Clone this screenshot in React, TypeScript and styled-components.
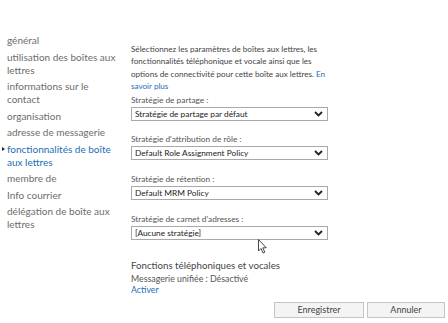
import React from "react";
import styled, { createGlobalStyle } from "styled-components";

const Global = createGlobalStyle`
  html, body { margin: 0; padding: 0; background: #ffffff; }
  body { font-family: Lato, "Open Sans", sans-serif; }
  * { box-sizing: border-box; }
`;

const Page = styled.div`
  position: relative;
  width: 448px;
  height: 323px;
  overflow: hidden;
  display: flex;
  flex-direction: column;
`;

const Body = styled.div`
  display: flex;
  flex-direction: row;
  align-items: flex-start;
`;

const Nav = styled.ul`
  list-style: none;
  margin: 0;
  padding: 34px 0 0 7px;
  width: 131px;
  display: flex;
  flex-direction: column;
  gap: 3.5px;
`;

const NavItem = styled.li<{ $active?: boolean }>`
  position: relative;
  font-size: 10px;
  line-height: 13px;
  color: ${(p) => (p.$active ? "#1d6eb6" : "#6d6d6d")};
  padding-right: 8px;
`;

const Bullet = styled.span`
  position: absolute;
  left: -5px;
  top: 4px;
  width: 0;
  height: 0;
  border-top: 2.5px solid transparent;
  border-bottom: 2.5px solid transparent;
  border-left: 3px solid #222;
`;

const Main = styled.div`
  width: 200px;
  padding-top: 42.8px;
  display: flex;
  flex-direction: column;
`;

const Desc = styled.p`
  margin: 0;
  width: 198px;
  font-size: 8.1px;
  line-height: 12.4px;
  color: #444;
`;

const Link = styled.a`
  color: #1d6eb6;
  text-decoration: none;
`;

const Field = styled.div<{ $top: number }>`
  margin-top: ${(p) => p.$top}px;
  display: flex;
  flex-direction: column;
  gap: 1px;
`;

const Label = styled.div`
  font-size: 8.3px;
  line-height: 12px;
  color: #555;
`;

const Select = styled.div`
  width: 197px;
  height: 14px;
  border: 1px solid #a9a9a9;
  background: #fff;
  display: flex;
  align-items: center;
  justify-content: space-between;
  padding: 0 4px 0 3px;
  font-size: 8.3px;
  color: #222;
`;

const Heading = styled.div`
  margin-top: 17.5px;
  font-size: 9.7px;
  line-height: 15px;
  color: #444;
`;

const Small = styled.div`
  font-size: 8.8px;
  line-height: 11px;
  color: #555;
`;

const Footer = styled.div`
  margin-top: auto;
  display: flex;
  justify-content: flex-end;
  gap: 3px;
  padding: 0 3px 5px 0;
`;

const Button = styled.button<{ $w: number }>`
  width: ${(p) => p.$w}px;
  height: 16px;
  border: 1px solid #c4c4c4;
  background: #f4f4f4;
  font-family: Lato, "Open Sans", sans-serif;
  font-size: 9px;
  color: #444;
  padding: 0;
  line-height: 14px;
`;

const Cursor = styled.svg`
  position: absolute;
  left: 258px;
  top: 239px;
`;

const Chevron = () => (
  <svg width="9" height="6" viewBox="0 0 9 6">
    <path d="M1 1 L4.5 4.5 L8 1" fill="none" stroke="#222" strokeWidth="1.8" />
  </svg>
);

const navItems = [
  "général",
  "utilisation des boîtes aux lettres",
  "informations sur le contact",
  "organisation",
  "adresse de messagerie",
  "fonctionnalités de boîte aux lettres",
  "membre de",
  "Info courrier",
  "délégation de boîte aux lettres",
];

const fields = [
  { label: "Stratégie de partage :", value: "Stratégie de partage par défaut", top: 1.6 },
  { label: "Stratégie d'attribution de rôle :", value: "Default Role Assignment Policy", top: 12 },
  { label: "Stratégie de rétention :", value: "Default MRM Policy", top: 13 },
  { label: "Stratégie de carnet d'adresses :", value: "[Aucune stratégie]", top: 13 },
];

export default function App() {
  return (
    <Page>
      <Global />
      <Body>
        <Nav>
          {navItems.map((n, i) => (
            <NavItem key={n} $active={i === 5}>
              {i === 5 && <Bullet />}
              {n}
            </NavItem>
          ))}
        </Nav>
        <Main>
          <Desc>
            Sélectionnez les paramètres de boîtes aux lettres, les fonctionnalités téléphonique et vocale ainsi que les options de connectivité pour cette boîte aux lettres.{" "}
            <Link href="#">En savoir plus</Link>
          </Desc>
          {fields.map((f) => (
            <Field key={f.label} $top={f.top}>
              <Label>{f.label}</Label>
              <Select>
                <span>{f.value}</span>
                <Chevron />
              </Select>
            </Field>
          ))}
          <Heading>Fonctions téléphoniques et vocales</Heading>
          <Small>Messagerie unifiée : Désactivé</Small>
          <Small>
            <Link href="#">Activer</Link>
          </Small>
        </Main>
      </Body>
      <Footer>
        <Button $w={90}>Enregistrer</Button>
        <Button $w={78}>Annuler</Button>
      </Footer>
      <Cursor width="10" height="16" viewBox="0 0 10 16">
        <path d="M0.5 0.5 L0.5 12 L3 9.5 L5 14 L6.8 13.2 L4.8 8.8 L8.3 8.8 Z" fill="#fff" stroke="#333" strokeWidth="0.9" />
      </Cursor>
    </Page>
  );
}
